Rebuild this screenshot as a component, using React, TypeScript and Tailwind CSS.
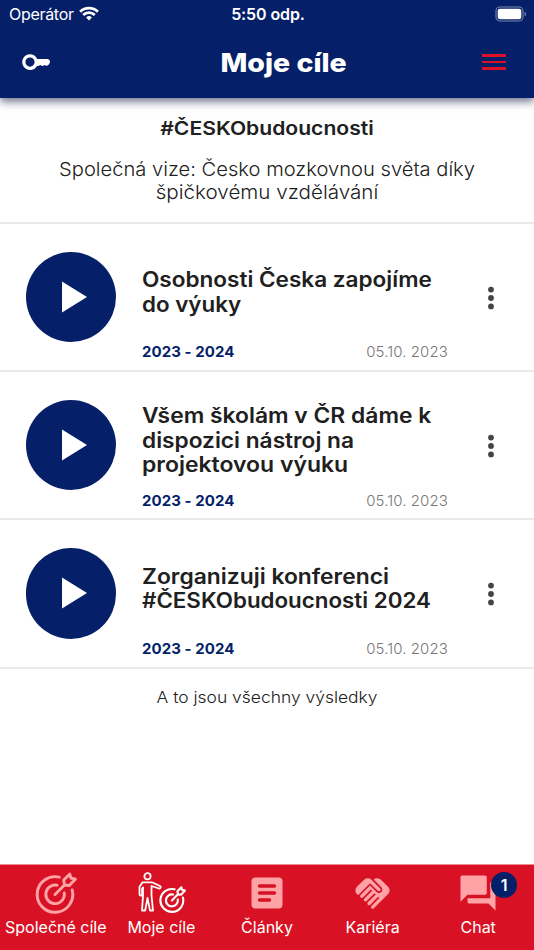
import React from "react";
import { MdForum, MdHandshake } from "react-icons/md";

const ink = "text-[#202020]";

function StatusBar() {
  return (
    <div className="flex h-[26px] items-center justify-between pl-[9px] pr-[7px] pt-px text-white">
      <div className="flex w-[160px] items-center gap-[5px]">
        <span className="whitespace-nowrap text-[16px] leading-[26px] tracking-[-0.300px]">Operátor</span>
        <svg width="20" height="15" viewBox="0 0 20 15" fill="none" stroke="white" strokeWidth="2.7" className="mb-px">
          <path d="M1.1 5.7a12.7 12.7 0 0 1 17.8 0" />
          <path d="M4.2 9a8.3 8.3 0 0 1 11.6 0" />
          <path d="M10 14.5l-2.9-3a4.1 4.1 0 0 1 5.8 0z" fill="white" stroke="none" />
        </svg>
      </div>
      <span className="whitespace-nowrap text-[16px] font-semibold leading-[26px] tracking-[-0.100px]">5:50 odp.</span>
      <div className="flex w-[160px] justify-end">
        <svg width="32" height="16" viewBox="0 0 32 16" fill="none">
          <rect x="1" y="1" width="27" height="14" rx="4" stroke="#7885b0" strokeWidth="1.1" />
          <rect x="2.7" y="2.8" width="23.6" height="10.4" rx="2.3" fill="white" />
          <path d="M29.6 5.7c2 .6 2 4 0 4.600z" fill="#7885b0" />
        </svg>
      </div>
    </div>
  );
}

function KeyIcon() {
  return (
    <svg width="30" height="20" viewBox="0 0 30 20">
      <path
        fill="white"
        fillRule="evenodd"
        d="M9 2.200a7.900 7.900 0 0 1 7.200 4.700h10.600q2.200.8 2.200 2.700c0 1.900-1.500 4.200-3.200 4.200-1 0-1.500-.9-2.200-.9s-1.200 1.100-2.200 1.100-1.500-1-2.200-1-1 1-2 1H16A7.900 7.900 0 1 1 9 2.200zm0 3.300a4.600 4.600 0 1 0 0 9.200A4.600 4.600 0 0 0 9 5.500z"
      />
    </svg>
  );
}

function TargetIcon({ size, sw }: { size: number; sw: number }) {
  return (
    <svg width={size} height={size} viewBox="0 0 42 42" fill="none" stroke="currentColor" strokeWidth={sw} strokeLinejoin="round" strokeLinecap="round">
      <path d="M24.300 5.200A17.800 17.800 0 1 0 37.200 18" />
      <path d="M22 13.200A9.300 9.300 0 1 0 29.300 21" />
      <path d="M20 22.500l9.500-9.500" />
      <path d="M29.500 13l-.8-5L34.800 2l1 4 4.500 1.200-6 6.300z" />
    </svg>
  );
}

function PersonIcon() {
  return (
    <svg width="25" height="42" viewBox="0 0 25 42" fill="none" stroke="white" strokeWidth="1.800" strokeLinejoin="round" strokeLinecap="round">
      <circle cx="9.500" cy="4.300" r="3.100" />
      <path d="M4.500 10.300h9.500l8 3.700c1.500 1 .5 2.800-1 2.500L13.500 14v9.500l1.500 15h-3L9.500 26 7.200 38.500H4L5 24v-8.500l-.9 1v6c-.3 1.500-2.400 1.500-2.600 0V15z" />
    </svg>
  );
}

function Header() {
  return (
    <header className="relative z-10 h-[98px] bg-[#051f69] shadow-[0_4px_8px_0px_rgba(10,15,60,0.55)]">
      <StatusBar />
      <div className="flex h-[72px] items-center justify-between pl-[21px] pr-[28px]">
        <div className="flex w-[94px]">
          <KeyIcon />
        </div>
        <h1 className="scale-x-[1.096] whitespace-nowrap text-[26px] font-extrabold text-white">Moje cíle</h1>
        <div className="flex w-[53px] flex-col items-end gap-[4px]">
          <div className="h-[2.500px] w-[24px] bg-[#dc1125]" />
          <div className="h-[2.500px] w-[24px] bg-[#dc1125]" />
          <div className="h-[2.500px] w-[24px] bg-[#dc1125]" />
        </div>
      </div>
    </header>
  );
}

function Goal({ children }: { children: React.ReactNode }) {
  return (
    <article className="flex h-[148.300px] border-b-2 border-[#e9e9e9] pl-[26px]">
      <div className="mt-[28px] flex size-[90.300px] shrink-0 items-center justify-center rounded-full bg-[#051f69]">
        <svg width="26" height="32" viewBox="0 0 26 32" className="ml-[7px]">
          <path d="M0 0.500L25 16L0 31.500z" fill="white" />
        </svg>
      </div>
      <div className="ml-[25.700px] flex w-[306px] flex-col">
        <h3 className={"flex h-[116px] flex-col justify-center pt-[22px] text-[21px] font-semibold leading-[24.600px] " + ink}>{children}</h3>
        <div className="flex h-[26px] items-center justify-between whitespace-nowrap text-[15px]">
          <span className="font-bold tracking-[0.060px] text-[#051f69]">2023 - 2024</span>
          <span className="font-light tracking-[0.100px] text-[#777777]">05.10. 2023</span>
        </div>
      </div>
      <svg width="6" height="24" viewBox="0 0 6 24" fill="#444444" className="ml-[40px] mt-[62px]">
        <circle cx="3" cy="3.600" r="2.900" />
        <circle cx="3" cy="12" r="2.900" />
        <circle cx="3" cy="20.400" r="2.900" />
      </svg>
    </article>
  );
}

function Tab({ label, children }: { label: string; children: React.ReactNode }) {
  return (
    <div className="flex flex-1 flex-col items-center">
      <div className="flex h-[50px] items-center justify-center pt-[6px]">{children}</div>
      <div className="whitespace-nowrap text-[16px] leading-[24px] text-white">{label}</div>
    </div>
  );
}

export default function App() {
  return (
    <div className="flex h-[950px] w-[534px] flex-col overflow-hidden bg-white font-['Inter',sans-serif]">
      <Header />
      <main className="flex flex-1 flex-col">
        <section className={"h-[125.700px] shrink-0 border-b-2 border-[#e9e9e9] text-center " + ink}>
          <h2 className="mt-[18px] scale-x-[1.11] whitespace-nowrap text-[19px] font-semibold leading-[26px]">#ČESKObudoucnosti</h2>
          <p className="mt-[16px] text-[19px] font-light leading-[23.300px]">
            <span className="block scale-x-[1.06] whitespace-nowrap">Společná vize: Česko mozkovnou světa díky</span>
            <span className="block scale-x-[1.085] whitespace-nowrap">špičkovému vzdělávání</span>
          </p>
        </section>
        <Goal>
          <span className="origin-left scale-x-[1.074] whitespace-nowrap">Osobnosti Česka zapojíme</span>
          <span className="origin-left scale-x-[1.065] whitespace-nowrap">do výuky</span>
        </Goal>
        <Goal>
          <span className="origin-left scale-x-[1.088] whitespace-nowrap">Všem školám v ČR dáme k</span>
          <span className="origin-left scale-x-[1.080] whitespace-nowrap">dispozici nástroj na</span>
          <span className="origin-left scale-x-[1.094] whitespace-nowrap">projektovou výuku</span>
        </Goal>
        <Goal>
          <span className="origin-left scale-x-[1.088] whitespace-nowrap">Zorganizuji konferenci</span>
          <span className="origin-left scale-x-[1.064] whitespace-nowrap">#ČESKObudoucnosti 2024</span>
        </Goal>
        <p className={"mt-[16px] scale-x-[1.09] text-center text-[16px] font-light leading-[24px] " + ink}>A to jsou všechny výsledky</p>
      </main>
      <nav className="flex h-[86px] shrink-0 border-t border-[#ee8990] bg-[#d81224] px-[3px]">
        <Tab label="Společné cíle">
          <div className="ml-px text-[#ffa3a6]"><TargetIcon size={42} sw={2.900} /></div>
        </Tab>
        <Tab label="Moje cíle">
          <PersonIcon />
          <div className="-ml-[4px] -mr-px mt-[12px] text-white"><TargetIcon size={27} sw={3.300} /></div>
        </Tab>
        <Tab label="Články">
          <svg width="32" height="32" viewBox="0 0 32 32">
            <rect x="0.500" y="0.500" width="31" height="31" rx="4" fill="#ffa3a6" />
            <path d="M8.500 9h15M8.500 16h15M8.500 23h10" stroke="#d81224" strokeWidth="3.400" strokeLinecap="round" />
          </svg>
        </Tab>
        <Tab label="Kariéra">
          <MdHandshake size={41} color="#ffa3a6" />
        </Tab>
        <Tab label="Chat">
          <div className="relative">
            <MdForum size={42} color="#ffa3a6" />
            <span className="absolute left-[34px] top-0 flex size-[26px] items-center justify-center rounded-full bg-[#051f69] text-[16px] font-semibold text-white">1</span>
          </div>
        </Tab>
      </nav>
    </div>
  );
}
